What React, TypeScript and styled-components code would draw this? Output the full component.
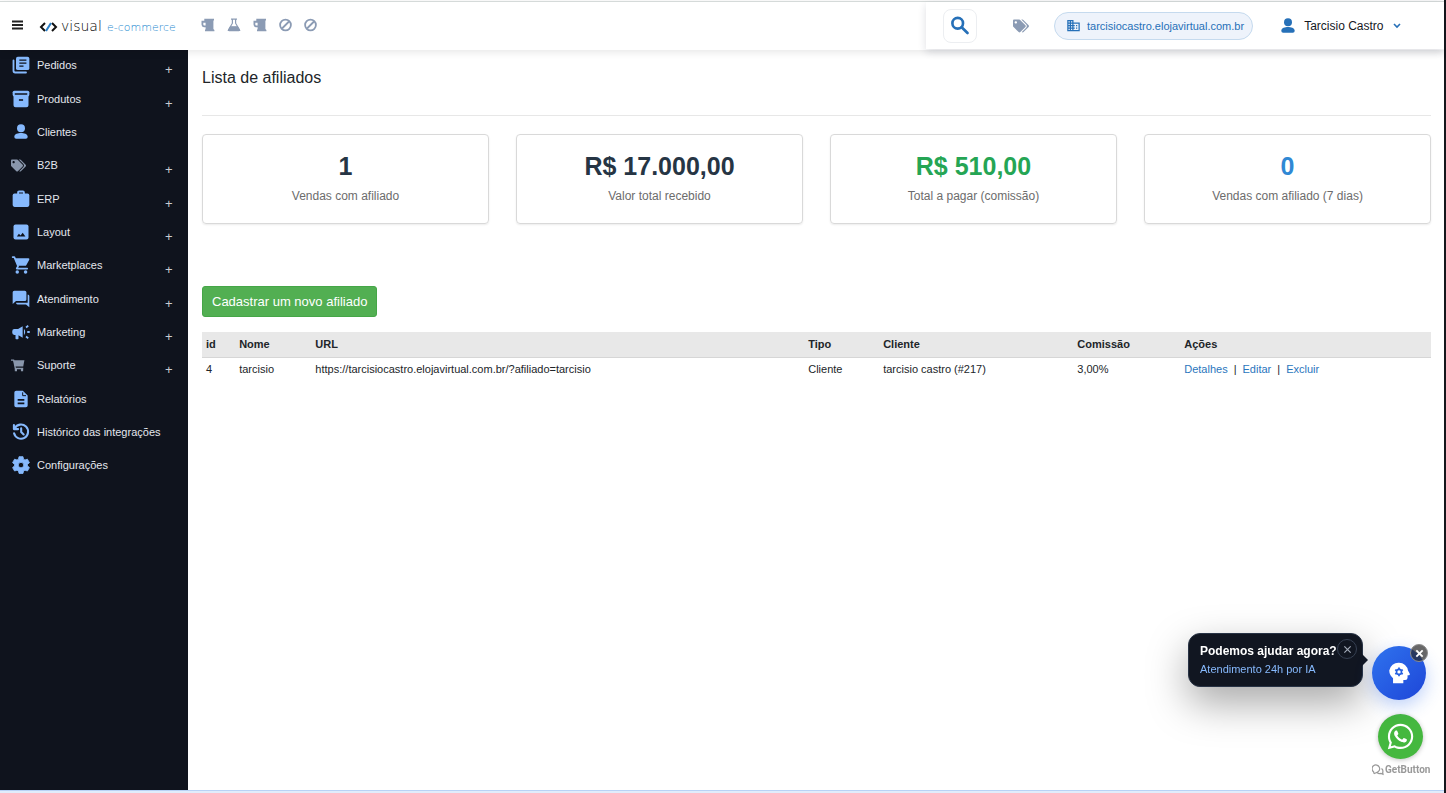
import React from "react";
import styled, { createGlobalStyle } from "styled-components";
import { MdBusiness } from "react-icons/md";
import { FaTags, FaWhatsapp } from "react-icons/fa";

const NIGHT = "#0f131d";

const Global = createGlobalStyle`
  * { box-sizing: border-box; }
  body { margin: 0; background: #fff; color: #212529; font: 11px/16px "Liberation Sans", Arial, sans-serif; }
  button { font: inherit; border: 0; padding: 0; background: none; cursor: pointer; }
  a { text-decoration: none; }
  svg { flex: none; }
`;

const Page = styled.div`
  min-height: 100vh;
  display: flex;
  flex-direction: column;
  padding-top: 1px;
  border-right: 2px solid #15171c;
`;

const TopBar = styled.header`
  position: relative;
  z-index: 1;
  height: 49px;
  display: flex;
  align-items: center;
  border-top: 1px solid #d5dad9;
  background: #fff;
  box-shadow: 0 2px 8px rgba(0, 0, 0, 0.1);
`;

const MenuButton = styled.button`
  display: flex;
  margin-left: 12px;
  padding-bottom: 2px;
`;

const Logo = styled.a`
  display: flex;
  margin-left: 16px;
  padding-top: 2px;
`;

const Shortcuts = styled.nav`
  display: flex;
  gap: 10px;
  margin-left: 22px;
  padding-bottom: 3px;
  color: #8b9bb4;
  button { display: flex; color: inherit; }
`;

const Account = styled.div`
  display: flex;
  align-items: center;
  align-self: flex-start;
  height: 47px;
  width: 518px;
  margin-left: auto;
  padding-left: 17px;
  background: #fff;
  box-shadow: 0 3px 8px rgba(20, 30, 60, 0.14);
`;

const SearchButton = styled.button`
  display: grid;
  place-items: center;
  width: 34px;
  height: 34px;
  border: 1px solid #eceef1;
  border-radius: 8px;
  color: #2670b8;
`;

const TagsButton = styled.button`
  display: flex;
  margin-left: 36px;
  color: #8b9bb4;
`;

const StoreLink = styled.a`
  display: flex;
  align-items: center;
  gap: 6px;
  height: 28px;
  margin-left: 25px;
  padding: 0 8px 0 11px;
  border: 1px solid #c5daee;
  border-radius: 14px;
  background: #eef3fb;
  color: #2670b8;
`;

const UserButton = styled.button`
  display: flex;
  align-items: center;
  gap: 6px;
  margin-left: 25px;
  color: #15181f;
  font-size: 12px;
  svg { color: #2670b8; }
`;

const Body = styled.div`
  flex: 1;
  display: flex;
`;

const Sidebar = styled.nav`
  width: 188px;
  flex: none;
  background: ${NIGHT};
  display: flex;
  flex-direction: column;
`;

const SideItem = styled.a<{ $muted?: boolean }>`
  display: grid;
  grid-template-columns: 20px 1fr 8px;
  column-gap: 6px;
  align-items: center;
  height: 33px;
  padding: 0 15px 3px 11px;
  color: #e4e7ee;
  white-space: nowrap;
  svg { color: ${(p) => (p.$muted ? "#8996ab" : "#86b9fd")}; }
  &:nth-child(3n + 2) { height: 34px; }
`;

const Plus = styled.span`
  padding-top: 10px;
  font-size: 13px;
  color: #c9ccd3;
`;

const Main = styled.main`
  flex: 1;
  min-width: 0;
  padding: 17px 13px 0 14px;
`;

const Title = styled.h1`
  margin: 0;
  padding-bottom: 27px;
  border-bottom: 1px solid #e7e7e7;
  font-size: 16px;
  line-height: 21px;
  font-weight: 400;
`;

const Stats = styled.section`
  display: grid;
  grid-template-columns: repeat(4, 1fr);
  gap: 27px;
  margin: 18px 0 62px;
`;

const Stat = styled.div<{ $color: string }>`
  height: 90px;
  padding-top: 15px;
  border: 1px solid #d9d9d9;
  border-radius: 4px;
  box-shadow: 0 1px 2px rgba(0, 0, 0, 0.08);
  text-align: center;
  color: #6c6c6c;
  font-size: 12px;
  strong {
    display: block;
    margin-bottom: 6px;
    color: ${(p) => p.$color};
    font-size: 25px;
    line-height: 32px;
  }
`;

const AddButton = styled.button`
  height: 31px;
  padding: 0 9px;
  border: 1px solid #45a647;
  border-radius: 3px;
  background: #52af52;
  color: #fff;
  font-size: 13px;
`;

const Table = styled.table`
  width: 100%;
  margin-top: 15px;
  border-collapse: collapse;
  table-layout: fixed;
  th, td { padding: 0 4px; text-align: left; white-space: nowrap; }
  th { height: 25px; background: #e8e8e8; border-bottom: 1px solid #d6d6d6; }
  td { height: 23px; }
  a { color: #2a76bd; }
`;

const Divider = styled.span`
  margin: 0 6px;
`;

const StatusLine = styled.footer`
  height: 3px;
  border-top: 1px solid #b9d2f6;
  background: #e1ecfb;
`;

const Help = styled.aside`
  position: fixed;
  right: 16px;
  bottom: 15px;
  z-index: 2;
  display: flex;
  align-items: flex-end;
  gap: 9px;
`;

const Bubble = styled.div`
  position: relative;
  width: 175px;
  height: 54px;
  margin-bottom: 91px;
  padding: 9px 11px;
  border: 1px solid #283345;
  border-radius: 12px;
  background: #111621;
  box-shadow: 0 16px 40px rgba(0, 0, 0, 0.35);
  color: #86b9fd;
  strong { display: block; margin-bottom: 2px; color: #fff; font-size: 12px; white-space: nowrap; }
  &::after {
    content: "";
    position: absolute;
    left: 100%;
    top: 20px;
    border: 6px solid transparent;
    border-right: 0;
    border-left-color: #111621;
  }
`;

const BubbleClose = styled.button`
  position: absolute;
  top: 5px;
  right: 5px;
  display: grid;
  place-items: center;
  width: 20px;
  height: 20px;
  border: 1px solid #364052;
  border-radius: 50%;
  color: #a3abb8;
`;

const Contacts = styled.div`
  display: flex;
  flex-direction: column;
  align-items: flex-start;
`;

const AssistantWrap = styled.div`
  position: relative;
  margin-bottom: 14px;
`;

const AssistantButton = styled.button`
  display: grid;
  place-items: center;
  width: 54px;
  height: 54px;
  border-radius: 50%;
  background: linear-gradient(135deg, #2f73ee, #1e46d8);
  box-shadow: 0 6px 18px rgba(37, 99, 235, 0.3);
  color: #fff;
`;

const AssistantClose = styled.button`
  position: absolute;
  top: -2px;
  right: -2px;
  display: grid;
  place-items: center;
  width: 18px;
  height: 18px;
  border: 1px solid #8b8b8b;
  border-radius: 50%;
  background: rgba(40, 40, 40, 0.7);
  color: #fff;
`;

const WhatsButton = styled.button`
  display: grid;
  place-items: center;
  width: 45px;
  height: 45px;
  margin-left: 6px;
  border-radius: 50%;
  background: #45b83f;
  box-shadow: 0 1px 5px rgba(0, 0, 0, 0.25);
  color: #fff;
`;

const Credit = styled.a`
  display: flex;
  align-items: center;
  gap: 1px;
  width: 58px;
  margin-top: 3px;
  color: #999;
  font: 700 10px/16px Roboto, sans-serif;
`;

const Mug = () => (
  <svg width="16" height="14" viewBox="0 0 16 14" fill="currentColor" aria-hidden="true">
    <path fillRule="evenodd" d="M4.300 2.200V.8H14v1.700h-.6V11l1 1v1.300H5V12l.6-1V9.200H4Q1.500 9 1.500 6.500V2.800h2.800zM3.300 4.700v1.800q0 1 1 1h1.300V4.700z" />
  </svg>
);

const Flask = () => (
  <svg width="16" height="14" viewBox="0 0 16 14" fill="none" stroke="currentColor" strokeWidth="1.2" aria-hidden="true">
    <path d="M5 1.200h6M6.400 1.200v4L2.600 11.800q-.4.900.6.900h9.600q1 0 .6-.9L9.600 5.200v-4" />
    <path d="M4.500 8.800h7l2 3.600h-11z" fill="currentColor" />
  </svg>
);

const Ban = () => (
  <svg width="15" height="14" viewBox="0 0 15 14" fill="none" stroke="currentColor" strokeWidth="1.8" aria-hidden="true">
    <circle cx="7.500" cy="7" r="5.400" />
    <path d="m4 10.500 7-7" />
  </svg>
);

const Glyph = ({ size = 20, children }: { size?: number; children: React.ReactNode }) => (
  <svg width={size} height={size} viewBox="0 0 24 24" fill="currentColor" aria-hidden="true">{children}</svg>
);

const Cross = ({ size, weight }: { size: number; weight: number }) => (
  <svg width={size} height={size} viewBox="0 0 10 10" fill="none" stroke="currentColor" strokeWidth={weight} aria-hidden="true">
    <path d="m1.500 1.500 7 7m0-7-7 7" />
  </svg>
);

const OrdersIcon = () => (
  <Glyph>
    <rect x="6" y="2" width="16" height="16" rx="2.200" />
    <path d="M3 6.500V19a2 2 0 0 0 2 2h13" fill="none" stroke="currentColor" strokeWidth="2.200" strokeLinecap="round" />
    <path d="M10 6.200h8.500M10 9.800h8.500M10 13.400h5" stroke={NIGHT} strokeWidth="1.600" />
  </Glyph>
);

const BoxIcon = () => (
  <Glyph>
    <rect x="2" y="2" width="20" height="7" rx="2" />
    <path d="M3 7h18v12.500a2.500 2.500 0 0 1-2.500 2.500h-13A2.500 2.500 0 0 1 3 19.500z" />
    <path d="M4.500 6h15" stroke={NIGHT} strokeWidth="1.800" />
    <path d="M9.500 13.200h5" stroke={NIGHT} strokeWidth="1.900" />
  </Glyph>
);

const PersonIcon = () => (
  <Glyph>
    <circle cx="12" cy="7.500" r="4.800" />
    <path d="M4 17.500c0-3.400 4.500-4.400 8-4.400s8 1 8 4.400V18a2.200 2.200 0 0 1-2.200 2.200H6.200A2.200 2.200 0 0 1 4 18z" />
  </Glyph>
);

const BriefcaseIcon = () => (
  <Glyph>
    <rect x="2" y="5.500" width="20" height="16" rx="2.200" />
    <path d="M8.500 7V4.200q0-1.200 1.200-1.200h4.600q1.200 0 1.200 1.200V7" fill="none" stroke="currentColor" strokeWidth="2.200" />
  </Glyph>
);

const ImageIcon = () => (
  <Glyph>
    <rect x="3" y="3" width="18" height="18" rx="2.400" />
    <path d="m7 17.500 2.500-3.500 2 2.200 2.500-3.200 3.300 4.500z" fill={NIGHT} />
  </Glyph>
);

const CartIcon = ({ size = 20 }: { size?: number }) => (
  <Glyph size={size}>
    <path d="M5 4h16q1.600.2.900 1.700l-3.400 6.200q-.6 1.100-1.800 1.100H8.300L5 5.600z" />
    <path d="M2 2.500h2l4.500 10.800-1.600 2.900h12.500" fill="none" stroke="currentColor" strokeWidth="2.100" strokeLinejoin="round" strokeLinecap="round" />
    <circle cx="7.500" cy="20.500" r="2.100" />
    <circle cx="17.500" cy="20.500" r="2.100" />
  </Glyph>
);

const TrolleyIcon = () => (
  <Glyph size={14}>
    <path d="M4 4h19l-2 10.500H7z" />
    <path d="M0 3.500h4.500L7.500 18H21" fill="none" stroke="currentColor" strokeWidth="2.200" />
    <path d="M6.500 19h3.800v3.800H6.500zM17 19h3.800v3.800H17z" />
  </Glyph>
);

const ChatIcon = () => (
  <Glyph>
    <path d="M4 2h12.500a2 2 0 0 1 2 2v8.500a2 2 0 0 1-2 2H6L2 18V4a2 2 0 0 1 2-2z" />
    <path d="M20 6.500a2 2 0 0 1 2 2V22l-4-3.500H8a2 2 0 0 1-2-2h14z" />
  </Glyph>
);

const MegaphoneIcon = () => (
  <Glyph>
    <path d="M4 8.500h4.500l5.500-3.300v13.600l-5-3v4q0 .8-.8.800H6.200q-.8 0-.8-.8v-4.300H4a2.500 2.500 0 0 1-2.500-2.500v-2A2.500 2.500 0 0 1 4 8.500z" />
    <path d="M15.500 8.200q3 3.800 0 7.600z" />
    <path d="M19.500 12h3M18 6.500l2.700-2M18 17.500l2.700 2" stroke="currentColor" strokeWidth="2.200" />
  </Glyph>
);

const FileIcon = () => (
  <Glyph>
    <path d="M6.200 2h8L20 7.800v12a2.200 2.200 0 0 1-2.200 2.200H6.200A2.200 2.200 0 0 1 4 19.800V4.200A2.200 2.200 0 0 1 6.200 2z" />
    <path d="M8 13h8M8 17.200h8" stroke={NIGHT} strokeWidth="1.900" />
    <path d="M14 4v4h4" stroke={NIGHT} strokeWidth="1.200" fill="none" />
  </Glyph>
);

const HistoryIcon = () => (
  <Glyph>
    <g fill="none" stroke="currentColor" strokeWidth="2.500" strokeLinecap="round" strokeLinejoin="round">
      <path d="M4.500 7.500a8.500 8.500 0 1 1-.8 6" />
      <path d="M3.500 3.500v5h5" />
      <path d="M12.200 7.500V12l3 3" />
    </g>
  </Glyph>
);

const GearIcon = () => (
  <Glyph>
    <path fillRule="evenodd" d="M9.600 2h4.800l.6 3 1.800 1 2.900-1 2.400 4.200-2.300 2v1.900l2.300 2-2.400 4.100-2.900-1-1.800 1-.6 2.900H9.600L9 19.200l-1.800-1-2.900 1-2.400-4.100 2.300-2v-1.900l-2.300-2L4.300 5l2.900 1L9 5zM12 8.800a3.300 3.300 0 1 0 0 6.600 3.300 3.300 0 0 0 0-6.600z" stroke="currentColor" strokeWidth="1" strokeLinejoin="round" />
  </Glyph>
);

const SearchIcon = () => (
  <Glyph size={22}>
    <g fill="none" stroke="currentColor" strokeWidth="2.900">
      <circle cx="9.500" cy="9" r="5.800" />
      <path d="m13.800 13.300 6.400 6.400" strokeLinecap="round" />
    </g>
  </Glyph>
);

const HeadIcon = () => (
  <Glyph size={26}>
    <path d="M12 2.500a8.300 8.300 0 0 1 8.300 7.300l1.600 3q.5 1.200-.7 1.200h-1.300v2.300a2.200 2.200 0 0 1-2.200 2.200H16v3H6.500v-4.700A9.200 9.200 0 0 1 3 9.800 8.600 8.600 0 0 1 12 2.500z" />
    <circle cx="12" cy="11" r="2.300" fill="none" stroke="#2560e2" strokeWidth="1.500" />
    <path d="M12 7v1.400M12 13.600V15M8.500 9l1.300.8M14.200 12.200l1.300.8M8.500 13l1.300-.8M14.200 9.800l1.300-.8" stroke="#2560e2" strokeWidth="1.600" />
  </Glyph>
);

const menu = [
  { label: "Pedidos", icon: <OrdersIcon />, more: true },
  { label: "Produtos", icon: <BoxIcon />, more: true },
  { label: "Clientes", icon: <PersonIcon /> },
  { label: "B2B", icon: <FaTags size={15} />, more: true, muted: true },
  { label: "ERP", icon: <BriefcaseIcon />, more: true },
  { label: "Layout", icon: <ImageIcon />, more: true },
  { label: "Marketplaces", icon: <CartIcon />, more: true },
  { label: "Atendimento", icon: <ChatIcon />, more: true },
  { label: "Marketing", icon: <MegaphoneIcon />, more: true },
  { label: "Suporte", icon: <TrolleyIcon />, more: true, muted: true },
  { label: "Relatórios", icon: <FileIcon /> },
  { label: "Histórico das integrações", icon: <HistoryIcon /> },
  { label: "Configurações", icon: <GearIcon /> },
];

const stats = [
  { value: "1", label: "Vendas com afiliado", color: "#263544" },
  { value: "R$ 17.000,00", label: "Valor total recebido", color: "#263544" },
  { value: "R$ 510,00", label: "Total a pagar (comissão)", color: "#25a554" },
  { value: "0", label: "Vendas com afiliado (7 dias)", color: "#3088d4" },
];

const columns = [
  { title: "id", width: "2.7%" },
  { title: "Nome", width: "6.2%" },
  { title: "URL", width: "40.1%" },
  { title: "Tipo", width: "6.1%" },
  { title: "Cliente", width: "15.8%" },
  { title: "Comissão", width: "8.7%" },
  { title: "Ações", width: "auto" },
];

export default function App() {
  return (
    <Page>
      <Global />
      <TopBar>
        <MenuButton aria-label="Menu">
          <svg width="11" height="10" viewBox="0 0 11 10" stroke="#222" strokeWidth="1.800">
            <path d="M0 1.500h11M0 5h11M0 8.500h11" />
          </svg>
        </MenuButton>
        <Logo href="#" aria-label="Visual e-commerce">
          <svg width="139" height="18" viewBox="0 0 139 18" fill="none" fontFamily="'DejaVu Sans', sans-serif" fontWeight="200">
            <path d="M6 5 2 9l4 4m7-8 4 4-4 4" stroke="#111" strokeWidth="2" />
            <path d="m7 13 5-8" stroke="#2c80c8" strokeWidth="2" />
            <text x="22" y="13" fontSize="14" fill="#000">visual</text>
            <text x="68" y="13" fontSize="11" fill="#2388cf">e-commerce</text>
          </svg>
        </Logo>
        <Shortcuts>
          <button aria-label="Cache"><Mug /></button>
          <button aria-label="Testes"><Flask /></button>
          <button aria-label="Cache da loja"><Mug /></button>
          <button aria-label="Bloqueio"><Ban /></button>
          <button aria-label="Bloqueio da loja"><Ban /></button>
        </Shortcuts>
        <Account>
          <SearchButton aria-label="Buscar"><SearchIcon /></SearchButton>
          <TagsButton aria-label="Etiquetas"><FaTags size={16} /></TagsButton>
          <StoreLink href="#"><MdBusiness size={15} />tarcisiocastro.elojavirtual.com.br</StoreLink>
          <UserButton>
            <PersonIcon />
            Tarcisio Castro
            <svg width="16" height="10" viewBox="0 0 16 10" fill="none" stroke="currentColor" strokeWidth="1.600">
              <path d="m5 3 3 3 3-3" />
            </svg>
          </UserButton>
        </Account>
      </TopBar>
      <Body>
        <Sidebar>
          {menu.map((m) => (
            <SideItem href="#" key={m.label} $muted={m.muted}>
              {m.icon}
              <span>{m.label}</span>
              {m.more && <Plus>+</Plus>}
            </SideItem>
          ))}
        </Sidebar>
        <Main>
          <Title>Lista de afiliados</Title>
          <Stats>
            {stats.map((s) => (
              <Stat key={s.label} $color={s.color}><strong>{s.value}</strong>{s.label}</Stat>
            ))}
          </Stats>
          <AddButton>Cadastrar um novo afiliado</AddButton>
          <Table>
            <colgroup>{columns.map((c) => <col key={c.title} style={{ width: c.width }} />)}</colgroup>
            <thead><tr>{columns.map((c) => <th key={c.title}>{c.title}</th>)}</tr></thead>
            <tbody>
              <tr>
                <td>4</td>
                <td>tarcisio</td>
                <td>https://tarcisiocastro.elojavirtual.com.br/?afiliado=tarcisio</td>
                <td>Cliente</td>
                <td>tarcisio castro (#217)</td>
                <td>3,00%</td>
                <td>
                  <a href="#">Detalhes</a><Divider>|</Divider><a href="#">Editar</a><Divider>|</Divider><a href="#">Excluir</a>
                </td>
              </tr>
            </tbody>
          </Table>
        </Main>
      </Body>
      <StatusLine />
      <Help>
        <Bubble>
          <strong>Podemos ajudar agora?</strong>
          Atendimento 24h por IA
          <BubbleClose aria-label="Fechar"><Cross size={9} weight={1.3} /></BubbleClose>
        </Bubble>
        <Contacts>
          <AssistantWrap>
            <AssistantButton aria-label="Assistente"><HeadIcon /></AssistantButton>
            <AssistantClose aria-label="Fechar assistente"><Cross size={9} weight={2} /></AssistantClose>
          </AssistantWrap>
          <WhatsButton aria-label="WhatsApp"><FaWhatsapp size={29} /></WhatsButton>
          <Credit href="#">
            <svg width="12" height="12" viewBox="0 0 12 12" fill="none" stroke="currentColor" strokeWidth="1.200">
              <path d="M2 9.500 1.600 7.800A3.800 3.800 0 1 1 4.500 8.500L2 9.800M9.500 4.500q2 1.500 1.200 3.700l.3 2-2-.8q-2.500.8-3.800-.7" />
            </svg>
            GetButton
          </Credit>
        </Contacts>
      </Help>
    </Page>
  );
}
